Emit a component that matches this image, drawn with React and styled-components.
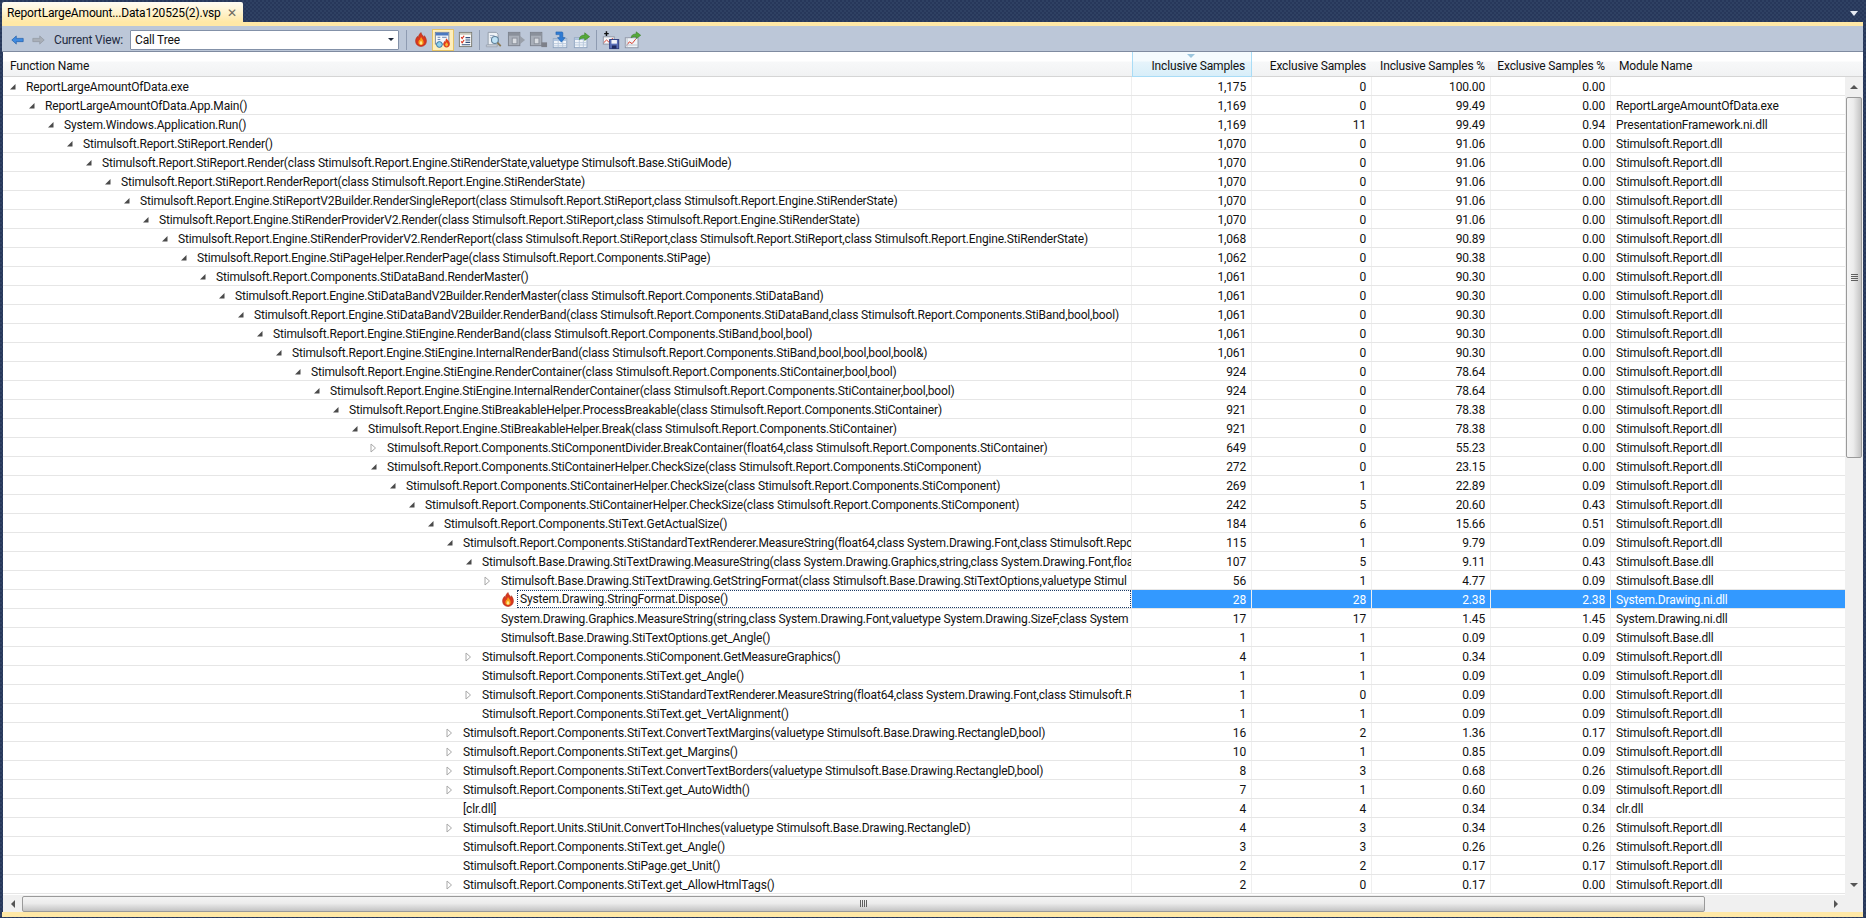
import React from "react";
import styled, { createGlobalStyle } from "styled-components";

const GlobalStyle = createGlobalStyle`
  html, body {
    margin: 0;
    padding: 0;
    overflow: hidden;
  }
  body {
    font-family: Roboto, "Noto Sans", sans-serif;
    font-size: 12px;
    letter-spacing: -0.165px;
    color: #111;
  }
`;

const R = "Stimulsoft.Report.dll";
const B = "Stimulsoft.Base.dll";
const D = "System.Drawing.ni.dll";

// [level, arrow, name, incl, excl, incl %, excl %, module]
const rows = [
  [0, "open", "ReportLargeAmountOfData.exe", "1,175", "0", "100.00", "0.00", ""],
  [1, "open", "ReportLargeAmountOfData.App.Main()", "1,169", "0", "99.49", "0.00", "ReportLargeAmountOfData.exe"],
  [2, "open", "System.Windows.Application.Run()", "1,169", "11", "99.49", "0.94", "PresentationFramework.ni.dll"],
  [3, "open", "Stimulsoft.Report.StiReport.Render()", "1,070", "0", "91.06", "0.00", R],
  [4, "open", "Stimulsoft.Report.StiReport.Render(class Stimulsoft.Report.Engine.StiRenderState,valuetype Stimulsoft.Base.StiGuiMode)", "1,070", "0", "91.06", "0.00", R],
  [5, "open", "Stimulsoft.Report.StiReport.RenderReport(class Stimulsoft.Report.Engine.StiRenderState)", "1,070", "0", "91.06", "0.00", R],
  [6, "open", "Stimulsoft.Report.Engine.StiReportV2Builder.RenderSingleReport(class Stimulsoft.Report.StiReport,class Stimulsoft.Report.Engine.StiRenderState)", "1,070", "0", "91.06", "0.00", R],
  [7, "open", "Stimulsoft.Report.Engine.StiRenderProviderV2.Render(class Stimulsoft.Report.StiReport,class Stimulsoft.Report.Engine.StiRenderState)", "1,070", "0", "91.06", "0.00", R],
  [8, "open", "Stimulsoft.Report.Engine.StiRenderProviderV2.RenderReport(class Stimulsoft.Report.StiReport,class Stimulsoft.Report.StiReport,class Stimulsoft.Report.Engine.StiRenderState)", "1,068", "0", "90.89", "0.00", R],
  [9, "open", "Stimulsoft.Report.Engine.StiPageHelper.RenderPage(class Stimulsoft.Report.Components.StiPage)", "1,062", "0", "90.38", "0.00", R],
  [10, "open", "Stimulsoft.Report.Components.StiDataBand.RenderMaster()", "1,061", "0", "90.30", "0.00", R],
  [11, "open", "Stimulsoft.Report.Engine.StiDataBandV2Builder.RenderMaster(class Stimulsoft.Report.Components.StiDataBand)", "1,061", "0", "90.30", "0.00", R],
  [12, "open", "Stimulsoft.Report.Engine.StiDataBandV2Builder.RenderBand(class Stimulsoft.Report.Components.StiDataBand,class Stimulsoft.Report.Components.StiBand,bool,bool)", "1,061", "0", "90.30", "0.00", R],
  [13, "open", "Stimulsoft.Report.Engine.StiEngine.RenderBand(class Stimulsoft.Report.Components.StiBand,bool,bool)", "1,061", "0", "90.30", "0.00", R],
  [14, "open", "Stimulsoft.Report.Engine.StiEngine.InternalRenderBand(class Stimulsoft.Report.Components.StiBand,bool,bool,bool,bool&)", "1,061", "0", "90.30", "0.00", R],
  [15, "open", "Stimulsoft.Report.Engine.StiEngine.RenderContainer(class Stimulsoft.Report.Components.StiContainer,bool,bool)", "924", "0", "78.64", "0.00", R],
  [16, "open", "Stimulsoft.Report.Engine.StiEngine.InternalRenderContainer(class Stimulsoft.Report.Components.StiContainer,bool,bool)", "924", "0", "78.64", "0.00", R],
  [17, "open", "Stimulsoft.Report.Engine.StiBreakableHelper.ProcessBreakable(class Stimulsoft.Report.Components.StiContainer)", "921", "0", "78.38", "0.00", R],
  [18, "open", "Stimulsoft.Report.Engine.StiBreakableHelper.Break(class Stimulsoft.Report.Components.StiContainer)", "921", "0", "78.38", "0.00", R],
  [19, "closed", "Stimulsoft.Report.Components.StiComponentDivider.BreakContainer(float64,class Stimulsoft.Report.Components.StiContainer)", "649", "0", "55.23", "0.00", R],
  [19, "open", "Stimulsoft.Report.Components.StiContainerHelper.CheckSize(class Stimulsoft.Report.Components.StiComponent)", "272", "0", "23.15", "0.00", R],
  [20, "open", "Stimulsoft.Report.Components.StiContainerHelper.CheckSize(class Stimulsoft.Report.Components.StiComponent)", "269", "1", "22.89", "0.09", R],
  [21, "open", "Stimulsoft.Report.Components.StiContainerHelper.CheckSize(class Stimulsoft.Report.Components.StiComponent)", "242", "5", "20.60", "0.43", R],
  [22, "open", "Stimulsoft.Report.Components.StiText.GetActualSize()", "184", "6", "15.66", "0.51", R],
  [23, "open", "Stimulsoft.Report.Components.StiStandardTextRenderer.MeasureString(float64,class System.Drawing.Font,class Stimulsoft.Repo", "115", "1", "9.79", "0.09", R],
  [24, "open", "Stimulsoft.Base.Drawing.StiTextDrawing.MeasureString(class System.Drawing.Graphics,string,class System.Drawing.Font,floa", "107", "5", "9.11", "0.43", B],
  [25, "closed", "Stimulsoft.Base.Drawing.StiTextDrawing.GetStringFormat(class Stimulsoft.Base.Drawing.StiTextOptions,valuetype Stimul", "56", "1", "4.77", "0.09", B],
  [25, "hot", "System.Drawing.StringFormat.Dispose()", "28", "28", "2.38", "2.38", D],
  [25, "", "System.Drawing.Graphics.MeasureString(string,class System.Drawing.Font,valuetype System.Drawing.SizeF,class System", "17", "17", "1.45", "1.45", D],
  [25, "", "Stimulsoft.Base.Drawing.StiTextOptions.get_Angle()", "1", "1", "0.09", "0.09", B],
  [24, "closed", "Stimulsoft.Report.Components.StiComponent.GetMeasureGraphics()", "4", "1", "0.34", "0.09", R],
  [24, "", "Stimulsoft.Report.Components.StiText.get_Angle()", "1", "1", "0.09", "0.09", R],
  [24, "closed", "Stimulsoft.Report.Components.StiStandardTextRenderer.MeasureString(float64,class System.Drawing.Font,class Stimulsoft.R", "1", "0", "0.09", "0.00", R],
  [24, "", "Stimulsoft.Report.Components.StiText.get_VertAlignment()", "1", "1", "0.09", "0.09", R],
  [23, "closed", "Stimulsoft.Report.Components.StiText.ConvertTextMargins(valuetype Stimulsoft.Base.Drawing.RectangleD,bool)", "16", "2", "1.36", "0.17", R],
  [23, "closed", "Stimulsoft.Report.Components.StiText.get_Margins()", "10", "1", "0.85", "0.09", R],
  [23, "closed", "Stimulsoft.Report.Components.StiText.ConvertTextBorders(valuetype Stimulsoft.Base.Drawing.RectangleD,bool)", "8", "3", "0.68", "0.26", R],
  [23, "closed", "Stimulsoft.Report.Components.StiText.get_AutoWidth()", "7", "1", "0.60", "0.09", R],
  [23, "", "[clr.dll]", "4", "4", "0.34", "0.34", "clr.dll"],
  [23, "closed", "Stimulsoft.Report.Units.StiUnit.ConvertToHInches(valuetype Stimulsoft.Base.Drawing.RectangleD)", "4", "3", "0.34", "0.26", R],
  [23, "", "Stimulsoft.Report.Components.StiText.get_Angle()", "3", "3", "0.26", "0.26", R],
  [23, "", "Stimulsoft.Report.Components.StiPage.get_Unit()", "2", "2", "0.17", "0.17", R],
  [23, "closed", "Stimulsoft.Report.Components.StiText.get_AllowHtmlTags()", "2", "0", "0.17", "0.00", R],
];

const Flame = () => (
  <svg width="14" height="15" viewBox="0 0 16 17">
    <path d="M8 .5c.6 2.6 2 3.4 3.3 5.4.4-.5.5-1.1.5-1.8 1.5 1.9 2.4 3.8 2.4 6.2 0 3.7-2.8 6.2-6.2 6.2s-6.2-2.5-6.2-6.2c0-2.4 1.1-3.9 2.2-5.4.1.8.3 1.4.8 1.9C5 4.300 6 2.300 8 .5z" fill="#d9381e" stroke="#a8260f" strokeWidth=".6" />
    <path d="M8.200 5.500c.3 1.800 2.800 3 2.800 6 0 2-1.300 3.300-3 3.300s-3-1.300-3-3.200c0-1.500.8-2.300 1.300-3.200.2.500.4.800.7 1 0-1.500.3-2.800 1.200-3.900z" fill="#f9a01b" />
    <path d="M8 10c.5 1 1.500 1.500 1.500 2.700 0 1-.7 1.600-1.500 1.600s-1.500-.6-1.500-1.600C6.500 11.500 7.500 11 8 10z" fill="#ffe98a" />
  </svg>
);

const PageFlame = () => (
  <svg width="18" height="18" viewBox="0 0 20 20">
    <rect x="1.500" y="1.500" width="15" height="13" fill="#f4f7fb" stroke="#6d7f9b" />
    <rect x="2" y="2" width="14" height="3" fill="#4a78c0" />
    <path d="M4 7h3M9 7h5M4 9.500h3" stroke="#5c7cab" />
    <circle cx="6" cy="15" r="3.200" fill="#8fd0ee" stroke="#2c6d99" />
    <path d="M14 8c.3 1.600 3.600 3 3.600 6.400 0 2.300-1.700 3.800-3.600 3.800s-3.600-1.500-3.600-3.800c0-1.600.9-2.500 1.500-3.600.2.600.4.900.8 1.100-.2-1.500.5-3 1.300-3.900z" fill="#df3d1c" />
    <path d="M14 12.500c.5 1 1.600 1.600 1.600 2.900 0 1-.8 1.700-1.600 1.700s-1.600-.7-1.600-1.700c0-1.300 1.100-1.900 1.600-2.900z" fill="#fbb632" />
  </svg>
);

const CheckList = () => (
  <svg width="17" height="17" viewBox="0 0 18 18">
    <rect x="2.500" y="1.500" width="13" height="15" fill="#fdfdfb" stroke="#7a7a72" />
    <path d="M3 2h12v2H3z" fill="#c9c9bd" />
    <path d="M4.500 6.500l1 1.500 2-3" stroke="#d6301d" strokeWidth="1.200" fill="none" />
    <path d="M4.500 11l1 1.500 2-3" stroke="#d6301d" strokeWidth="1.200" fill="none" />
    <path d="M9 7h5M9 9.500h5M9 12h5M5 14.500h9" stroke="#35507c" strokeWidth="1.200" />
  </svg>
);

const PageSearch = () => (
  <svg width="18" height="18" viewBox="0 0 20 20">
    <path d="M3.500 1.500h9l2 2v12h-11z" fill="#eef1f5" stroke="#8f98a6" />
    <path d="M1.500 15.500h12v2h-12z" fill="#dbe0e8" stroke="#9aa3b0" />
    <circle cx="11" cy="10" r="3.800" fill="#bfe2f6" stroke="#5d7f99" strokeWidth="1.200" />
    <path d="M13.800 13l3.700 3.700" stroke="#8a7a55" strokeWidth="2" />
    <path d="M5.500 5h5M5.500 7.500h2" stroke="#9fb0c6" />
  </svg>
);

const GreyPlay = () => (
  <svg width="19" height="19" viewBox="0 0 20 20">
    <rect x="1.500" y="2.500" width="12" height="14" fill="#a9afb9" stroke="#7d838d" />
    <rect x="2" y="3" width="11" height="3" fill="#8a909b" />
    <rect x="5.500" y="8.500" width="5" height="6" fill="#d9dce1" stroke="#8a909b" />
    <path d="M13.500 6l5.500 4.500-5.500 4.500z" fill="#9aa0aa" />
  </svg>
);

const GreyStop = () => (
  <svg width="19" height="19" viewBox="0 0 20 20">
    <rect x="1.500" y="2.500" width="12" height="14" fill="#a9afb9" stroke="#7d838d" />
    <rect x="2" y="3" width="11" height="3" fill="#8a909b" />
    <rect x="5.500" y="8.500" width="5" height="6" fill="#d9dce1" stroke="#8a909b" />
    <rect x="13" y="13" width="6" height="5" fill="#7d8089" />
  </svg>
);

const TableDown = () => (
  <svg width="18" height="18" viewBox="0 0 20 20">
    <rect x="2.500" y="8.500" width="15" height="10" fill="#f1f5fa" stroke="#8ea3bf" />
    <rect x="3" y="9" width="14" height="2" fill="#a9c0dd" />
    <path d="M3 14h14M3 16.500h14M8 11v7M13 11v7" stroke="#b7c7db" />
    <path d="M5.500 1h6.500c.8 0 1.200.6 1.200 1.300v5h2.500L11.500 12.500 7.300 7.300h2.400V4H5.500z" fill="#2f7bd4" stroke="#1d5ea8" strokeWidth=".6" />
  </svg>
);

const TableOut = () => (
  <svg width="18" height="18" viewBox="0 0 20 20">
    <rect x="1.500" y="7.500" width="14" height="11" fill="#f1f5fa" stroke="#8ea3bf" />
    <rect x="2" y="8" width="13" height="2" fill="#a9c0dd" />
    <path d="M2 13h13M2 15.500h13M7 10v8M11.500 10v8" stroke="#b7c7db" />
    <path d="M7 9.500c0-3.300 2.300-5 6-5V2l5.500 4.300L13 10.500V8c-2.800 0-4.500.3-6 1.500z" fill="#55a93a" stroke="#367a22" strokeWidth=".6" />
  </svg>
);

const SaveChart = () => (
  <svg width="20" height="20" viewBox="0 0 22 22">
    <path d="M6 1.500v5M3.500 4h5" stroke="#111" strokeWidth="1.600" />
    <rect x="2.500" y="7.500" width="12" height="8" fill="#f5f6f8" stroke="#8b93a3" />
    <path d="M3 14l3-3 2.500 2 4.500-4" stroke="#d6301d" fill="none" />
    <rect x="9.500" y="10.500" width="10" height="10" fill="#5b6fb8" stroke="#2f3c7e" />
    <rect x="11.500" y="11" width="6" height="4" fill="#f2f4fa" />
    <rect x="12" y="17" width="5" height="3.500" fill="#1f2a60" />
  </svg>
);

const ChartOut = () => (
  <svg width="20" height="20" viewBox="0 0 22 22">
    <rect x="2.500" y="8.500" width="14" height="11" fill="#f1f4f8" stroke="#8b93a3" />
    <path d="M4 17l3-4 3 2 4-5" stroke="#d6301d" fill="none" />
    <path d="M4.500 8.500V19M2.500 16.500h14" stroke="#b8c0cc" />
    <path d="M9 8.500c0-2.800 2-4.200 5.500-4.200V2l5 3.800-5 3.800V7.300c-2.500 0-4 .3-5.500 1.200z" fill="#55a93a" stroke="#367a22" strokeWidth=".6" />
  </svg>
);

const NavBack = ({ fill, stroke }) => (
  <svg width="13" height="10" viewBox="0 0 16 12">
    <path d="M1 6l5.500-5v3H15v4H6.500v3z" fill={fill} stroke={stroke} strokeWidth=".8" />
  </svg>
);

const NavForward = ({ fill, stroke }) => (
  <svg width="13" height="10" viewBox="0 0 16 12">
    <path d="M15 6L9.500 1v3H1v4h8.500v3z" fill={fill} stroke={stroke} strokeWidth=".8" />
  </svg>
);

const TreeArrow = ({ kind }) => {
  if (kind === "open") {
    return (
      <svg width="8" height="8" viewBox="0 0 8 8">
        <path d="M6.500 1v5.500H1z" fill="#4a4a4a" />
      </svg>
    );
  }
  if (kind === "closed") {
    return (
      <svg width="7" height="10" viewBox="0 0 7 10">
        <path d="M1 1l4.500 4L1 9z" fill="#fff" stroke="#a8a8a8" />
      </svg>
    );
  }
  return null;
};

const App = () => {
  return (
    <Page>
      <GlobalStyle />
      <TabStrip>
        <Tab>
          <TabTitle>ReportLargeAmount...Data120525(2).vsp</TabTitle>
          <TabClose>✕</TabClose>
        </Tab>
        <StripMenu />
      </TabStrip>
      <Panel>
        <AccentBar />
        <Toolbar>
          <ToolSlot>
            <NavBack fill="#3f8ae0" stroke="#1c5aa6" />
          </ToolSlot>
          <ToolSlot>
            <NavForward fill="#a9afb8" stroke="#8e949d" />
          </ToolSlot>
          <ViewLabel>Current View:</ViewLabel>
          <ViewSelect>
            <span>Call Tree</span>
            <SelectCaret />
          </ViewSelect>
          <ToolDivider />
          <ToolButton>
            <Flame />
          </ToolButton>
          <ToolButton $active>
            <PageFlame />
          </ToolButton>
          <ToolButton>
            <CheckList />
          </ToolButton>
          <ToolDivider />
          <ToolButton>
            <PageSearch />
          </ToolButton>
          <ToolButton>
            <GreyPlay />
          </ToolButton>
          <ToolButton>
            <GreyStop />
          </ToolButton>
          <ToolButton>
            <TableDown />
          </ToolButton>
          <ToolButton>
            <TableOut />
          </ToolButton>
          <ToolDivider />
          <ToolButton>
            <SaveChart />
          </ToolButton>
          <ToolButton>
            <ChartOut />
          </ToolButton>
        </Toolbar>
        <Table>
          <HeaderRow>
            <HeaderCell>Function Name</HeaderCell>
            <HeaderCell $right $sorted>
              Inclusive Samples
            </HeaderCell>
            <HeaderCell $right>Exclusive Samples</HeaderCell>
            <HeaderCell $right>Inclusive Samples %</HeaderCell>
            <HeaderCell $right>Exclusive Samples %</HeaderCell>
            <HeaderCell $module>Module Name</HeaderCell>
          </HeaderRow>
          <Body>
            <RowList>
              {rows.map((r, index) => {
                const hot = r[1] === "hot";
                return (
                  <Row key={index}>
                    <NameCell $level={r[0]}>
                      <ArrowSlot>
                        <TreeArrow kind={r[1]} />
                      </ArrowSlot>
                      {hot ? (
                        <>
                          <HotIcon>
                            <Flame />
                          </HotIcon>
                          <FocusBox>{r[2]}</FocusBox>
                        </>
                      ) : (
                        r[2]
                      )}
                    </NameCell>
                    <NumCell $selected={hot}>{r[3]}</NumCell>
                    <NumCell $selected={hot}>{r[4]}</NumCell>
                    <NumCell $selected={hot}>{r[5]}</NumCell>
                    <NumCell $selected={hot}>{r[6]}</NumCell>
                    <ModuleCell $selected={hot}>{r[7]}</ModuleCell>
                  </Row>
                );
              })}
            </RowList>
            <VScroll>
              <ScrollEnd>
                <Caret $dir="up" />
              </ScrollEnd>
              <VThumb>
                <Grip />
              </VThumb>
              <VTrack />
              <ScrollEnd>
                <Caret $dir="down" />
              </ScrollEnd>
            </VScroll>
          </Body>
          <HScrollRow>
            <HScroll>
              <HEnd>
                <Caret $dir="left" />
              </HEnd>
              <HThumb>
                <HGrip />
              </HThumb>
              <HTrack />
              <HEnd>
                <Caret $dir="right" />
              </HEnd>
            </HScroll>
            <ScrollCorner />
          </HScrollRow>
        </Table>
        <BottomBar />
      </Panel>
    </Page>
  );
};

export default App;

const COLUMNS = "1129px 120px 120px 119px 120px 234px";

const Page = styled.div`
  width: 1866px;
  height: 918px;
  display: flex;
  flex-direction: column;
  overflow: hidden;
  background-color: #293955;
  background-image: repeating-conic-gradient(#2f4163 0 25%, #27375a 0 50%);
  background-size: 4px 4px;
`;

const TabStrip = styled.div`
  height: 22px;
  flex: none;
  display: flex;
  align-items: flex-end;
  justify-content: space-between;
  padding: 0 8px 0 2px;
`;

const Tab = styled.div`
  width: 241px;
  height: 20px;
  display: flex;
  align-items: center;
  justify-content: space-between;
  padding: 2px 6px 0 5px;
  box-sizing: border-box;
  border-radius: 2px 2px 0 0;
  background: linear-gradient(#fffcf4, #fff3cf 50%, #ffe8a6);
`;

const TabTitle = styled.span`
  color: #000;
  white-space: nowrap;
`;

const TabClose = styled.span`
  font-size: 12px;
  color: #6d6a5e;
  line-height: 1;
`;

const StripMenu = styled.div`
  width: 0;
  height: 0;
  margin-bottom: 6px;
  border-left: 4px solid transparent;
  border-right: 4px solid transparent;
  border-top: 5px solid #e6ebf3;
`;

const Panel = styled.div`
  flex: 1;
  min-height: 0;
  margin: 0 3px 1px 2px;
  display: flex;
  flex-direction: column;
`;

const AccentBar = styled.div`
  height: 4px;
  flex: none;
  background: #ffe8a6;
`;

const BottomBar = styled.div`
  flex: none;
  height: 5px;
  margin-top: 1px;
  background: #ffe8a6;
`;

const Toolbar = styled.div`
  height: 26px;
  flex: none;
  display: flex;
  align-items: center;
  padding: 2px 0 0 5px;
  background: #bcc7d8;
  border-bottom: 1px solid #7f8ba0;
  box-sizing: border-box;
`;

const ToolSlot = styled.div`
  width: 21px;
  height: 22px;
  flex: none;
  display: flex;
  align-items: center;
  justify-content: center;
`;

const ToolButton = styled(ToolSlot)`
  width: 22px;
  box-sizing: border-box;
  border: 1px solid ${(props) => (props.$active ? "#e5c365" : "transparent")};
  background: ${(props) => (props.$active ? "#ffefbb" : "transparent")};
`;

const ViewLabel = styled.div`
  width: 76px;
  margin-left: 5px;
  flex: none;
  color: #1e2a40;
  white-space: nowrap;
`;

const ViewSelect = styled.div`
  width: 269px;
  height: 20px;
  flex: none;
  display: flex;
  align-items: center;
  justify-content: space-between;
  padding: 0 3px 0 4px;
  box-sizing: border-box;
  background: #fff;
  border: 1px solid #8391a8;
  border-radius: 1px;
  margin-right: 4px;
`;

const SelectCaret = styled.i`
  width: 0;
  height: 0;
  margin-right: 1px;
  border-left: 3px solid transparent;
  border-right: 3px solid transparent;
  border-top: 3px solid #1b2638;
`;

const ToolDivider = styled.div`
  width: 1px;
  height: 20px;
  flex: none;
  margin: 0 3px;
  background: #8e9bb1;
`;

const Table = styled.div`
  flex: 1;
  min-height: 0;
  margin-left: 1px;
  display: flex;
  flex-direction: column;
  background: #fff;
`;

const HeaderRow = styled.div`
  height: 25px;
  flex: none;
  display: grid;
  grid-template-columns: ${COLUMNS};
  box-sizing: border-box;
  border-bottom: 1px solid #d5d5d5;
  background: linear-gradient(#fff 0 9px, #f7f8f9 10px, #f1f2f3);
`;

const HeaderCell = styled.div`
  position: relative;
  display: flex;
  align-items: flex-end;
  justify-content: ${(props) => (props.$right ? "flex-end" : "flex-start")};
  padding: ${(props) => (props.$module ? "0 0 3px 8px" : props.$right ? "0 6px 3px 0" : "0 0 3px 7px")};
  box-sizing: border-box;
  white-space: nowrap;
  color: #111;
  ${(props) =>
    props.$sorted &&
    `
    border: 1px solid #a9dcf6;
    border-width: 0 1px 1px 1px;
    margin-bottom: -1px;
    background: linear-gradient(#f5fbfe 0 9px, #e6f4fb 10px, #d8eef9);
    &::before {
      content: "";
      position: absolute;
      top: 2px;
      left: 54px;
      border-left: 4px solid transparent;
      border-right: 4px solid transparent;
      border-top: 4px solid #9bc6de;
    }
  `}
`;

const Body = styled.div`
  height: 818px;
  flex: none;
  display: flex;
  overflow: hidden;
`;

const RowList = styled.div`
  width: 1842px;
  flex: none;
`;

const Row = styled.div`
  height: 19px;
  display: grid;
  grid-template-columns: ${COLUMNS};
  box-sizing: border-box;
  border-bottom: 1px solid #e6e6e6;
`;

const NameCell = styled.div`
  display: flex;
  align-items: center;
  padding-top: 1px;
  padding-left: ${(props) => 5 + props.$level * 19}px;
  white-space: nowrap;
  overflow: hidden;
  min-width: 0;
  border-right: 1px solid #efefef;
`;

const ArrowSlot = styled.span`
  width: 18px;
  flex: none;
  display: flex;
  align-items: center;
  padding-left: 1px;
  box-sizing: border-box;
`;

const HotIcon = styled.span`
  width: 16px;
  flex: none;
  display: flex;
  align-items: center;
`;

const FocusBox = styled.div`
  flex: 1;
  height: 18px;
  margin-top: -1px;
  display: flex;
  align-items: center;
  padding-left: 2px;
  box-sizing: border-box;
  border: 1px dotted #1b3a66;
`;

const NumCell = styled.div`
  display: flex;
  align-items: center;
  justify-content: flex-end;
  padding: 1px 5px 0 0;
  box-sizing: border-box;
  border-right: 1px solid #efefef;
  background: ${(props) => (props.$selected ? "#3399ff" : "transparent")};
  color: ${(props) => (props.$selected ? "#fff" : "inherit")};
`;

const ModuleCell = styled.div`
  display: flex;
  align-items: center;
  padding: 1px 0 0 5px;
  white-space: nowrap;
  overflow: hidden;
  background: ${(props) => (props.$selected ? "#3399ff" : "transparent")};
  color: ${(props) => (props.$selected ? "#fff" : "inherit")};
`;

const VScroll = styled.div`
  width: 18px;
  flex: none;
  display: flex;
  flex-direction: column;
  align-items: center;
  box-sizing: border-box;
  background: #f0f0f0;
`;

const ScrollEnd = styled.div`
  height: 20px;
  width: 100%;
  flex: none;
  display: flex;
  align-items: center;
  justify-content: center;
`;

const VThumb = styled.div`
  width: 16px;
  height: 361px;
  flex: none;
  display: flex;
  align-items: center;
  justify-content: center;
  box-sizing: border-box;
  border: 1px solid #9a9a9a;
  border-radius: 2px;
  background: linear-gradient(90deg, #f4f4f4, #ececec 45%, #c3c3c3);
`;

const Grip = styled.div`
  width: 7px;
  height: 8px;
  background: repeating-linear-gradient(#5f5f5f 0 1px, transparent 1px 2px);
`;

const VTrack = styled.div`
  flex: 1;
`;

const Caret = styled.i`
  width: 0;
  height: 0;
  ${(props) =>
    props.$dir === "up" || props.$dir === "down"
      ? `
    border-left: 4px solid transparent;
    border-right: 4px solid transparent;
    border-${props.$dir === "up" ? "bottom" : "top"}: 4px solid #555;
  `
      : `
    border-top: 4px solid transparent;
    border-bottom: 4px solid transparent;
    border-${props.$dir === "left" ? "right" : "left"}: 4px solid #555;
  `}
`;

const HScrollRow = styled.div`
  height: 17px;
  flex: none;
  display: flex;
`;

const HScroll = styled.div`
  width: 1842px;
  flex: none;
  display: flex;
  align-items: center;
  background: #f0f0f0;
`;

const HEnd = styled.div`
  width: 19px;
  height: 100%;
  flex: none;
  display: flex;
  align-items: center;
  justify-content: center;
`;

const HThumb = styled.div`
  width: 1683px;
  height: 16px;
  flex: none;
  display: flex;
  align-items: center;
  justify-content: center;
  box-sizing: border-box;
  border: 1px solid #9a9a9a;
  border-radius: 2px;
  background: linear-gradient(#f4f4f4, #ececec 45%, #c3c3c3);
`;

const HGrip = styled.div`
  width: 8px;
  height: 7px;
  background: repeating-linear-gradient(90deg, #5f5f5f 0 1px, transparent 1px 2px);
`;

const HTrack = styled.div`
  flex: 1;
`;

const ScrollCorner = styled.div`
  flex: 1;
  background: #f0f0f0;
`;
